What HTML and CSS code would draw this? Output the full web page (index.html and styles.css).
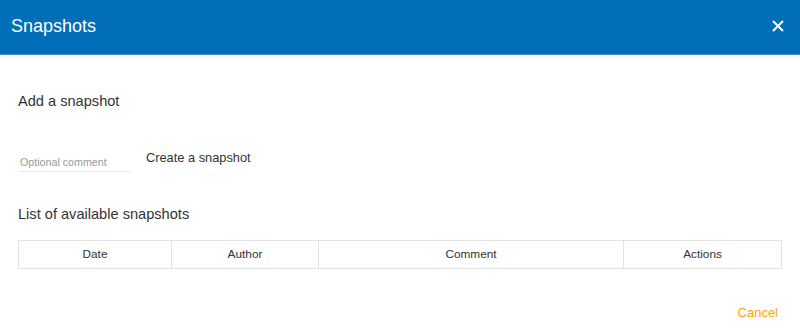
FILE: index.html
```html
<!DOCTYPE html>
<html lang="en">
<head>
  <meta charset="UTF-8" />
  <meta name="viewport" content="width=device-width, initial-scale=1.0"/>
  <title>Snapshots</title>
  <link rel="stylesheet" href="styles.css">
</head>
<body>

  <div class="dialog">
    <header class="dialog-header">
      <h1>Snapshots</h1>
      <button class="close" aria-label="Close">
        <svg width="12" height="12" viewBox="0 0 12 12">
          <path d="M1 1 L11 11 M11 1 L1 11" stroke="#fff" stroke-width="2" fill="none"/>
        </svg>
      </button>
    </header>

    <section class="dialog-body">
      <h2>Add a snapshot</h2>
      <div class="create-row">
        <input type="text" class="comment" placeholder="Optional comment">
        <button class="create">Create a snapshot</button>
      </div>

      <h2 class="list-title">List of available snapshots</h2>
      <table class="snapshots">
        <thead>
          <tr>
            <th class="col-date">Date</th>
            <th class="col-author">Author</th>
            <th class="col-comment">Comment</th>
            <th class="col-actions">Actions</th>
          </tr>
        </thead>
      </table>
    </section>

    <footer class="dialog-footer">
      <button class="cancel">Cancel</button>
    </footer>
  </div>

</body>
</html>
```

FILE: styles.css
```css
* {
  box-sizing: border-box;
}

body {
  margin: 0;
  font-family: "Liberation Sans", Arial, sans-serif;
  color: #333;
  background: #fff;
}

.dialog-header {
  height: 55px;
  background: #006eb8;
  border-bottom: 1px solid #3d8fcc;
  display: flex;
  justify-content: space-between;
  align-items: center;
  padding: 0 16px 2px 11px;
}

.dialog-header h1 {
  margin: 0;
  font-weight: normal;
  font-size: 18px;
  color: #fff;
}

.close {
  background: none;
  border: none;
  padding: 0;
  display: flex;
  cursor: pointer;
}

.dialog-body {
  padding: 36px 18px 0 18px;
}

.dialog-body h2 {
  margin: 0;
  font-size: 14.6px;
  font-weight: normal;
  color: #333;
  line-height: 20px;
}

.create-row {
  display: flex;
  align-items: center;
  margin-top: 38px;
  padding-left: 1px;
}

.comment {
  width: 111px;
  border: none;
  border-bottom: 1px solid #e6e6e6;
  font-family: "Liberation Sans", Arial, sans-serif;
  font-size: 10.7px;
  padding: 7px 1px 3px 1px;
  outline: none;
}

.comment::placeholder {
  color: #999;
}

.create {
  background: none;
  border: none;
  font-family: "Liberation Sans", Arial, sans-serif;
  font-size: 12.8px;
  color: #333;
  padding: 0;
  margin-left: 16px;
  margin-bottom: 6px;
  cursor: pointer;
}

.dialog-body .list-title {
  margin-top: 32px;
}

.snapshots {
  width: 764px;
  margin-top: 16px;
  border-collapse: collapse;
}

.snapshots th {
  border: 1px solid #e3e3e3;
  height: 28px;
  padding-bottom: 2px;
  font-size: 11.8px;
  font-weight: normal;
  color: #333;
}

.col-date { width: 153px; }
.col-author { width: 147px; }
.col-comment { width: 305px; }

.dialog-footer {
  display: flex;
  justify-content: flex-end;
  padding: 36px 22px 0 0;
}

.cancel {
  background: none;
  border: none;
  padding: 0;
  font-family: "Liberation Sans", Arial, sans-serif;
  font-size: 13px;
  color: #ffa500;
  cursor: pointer;
}
```
